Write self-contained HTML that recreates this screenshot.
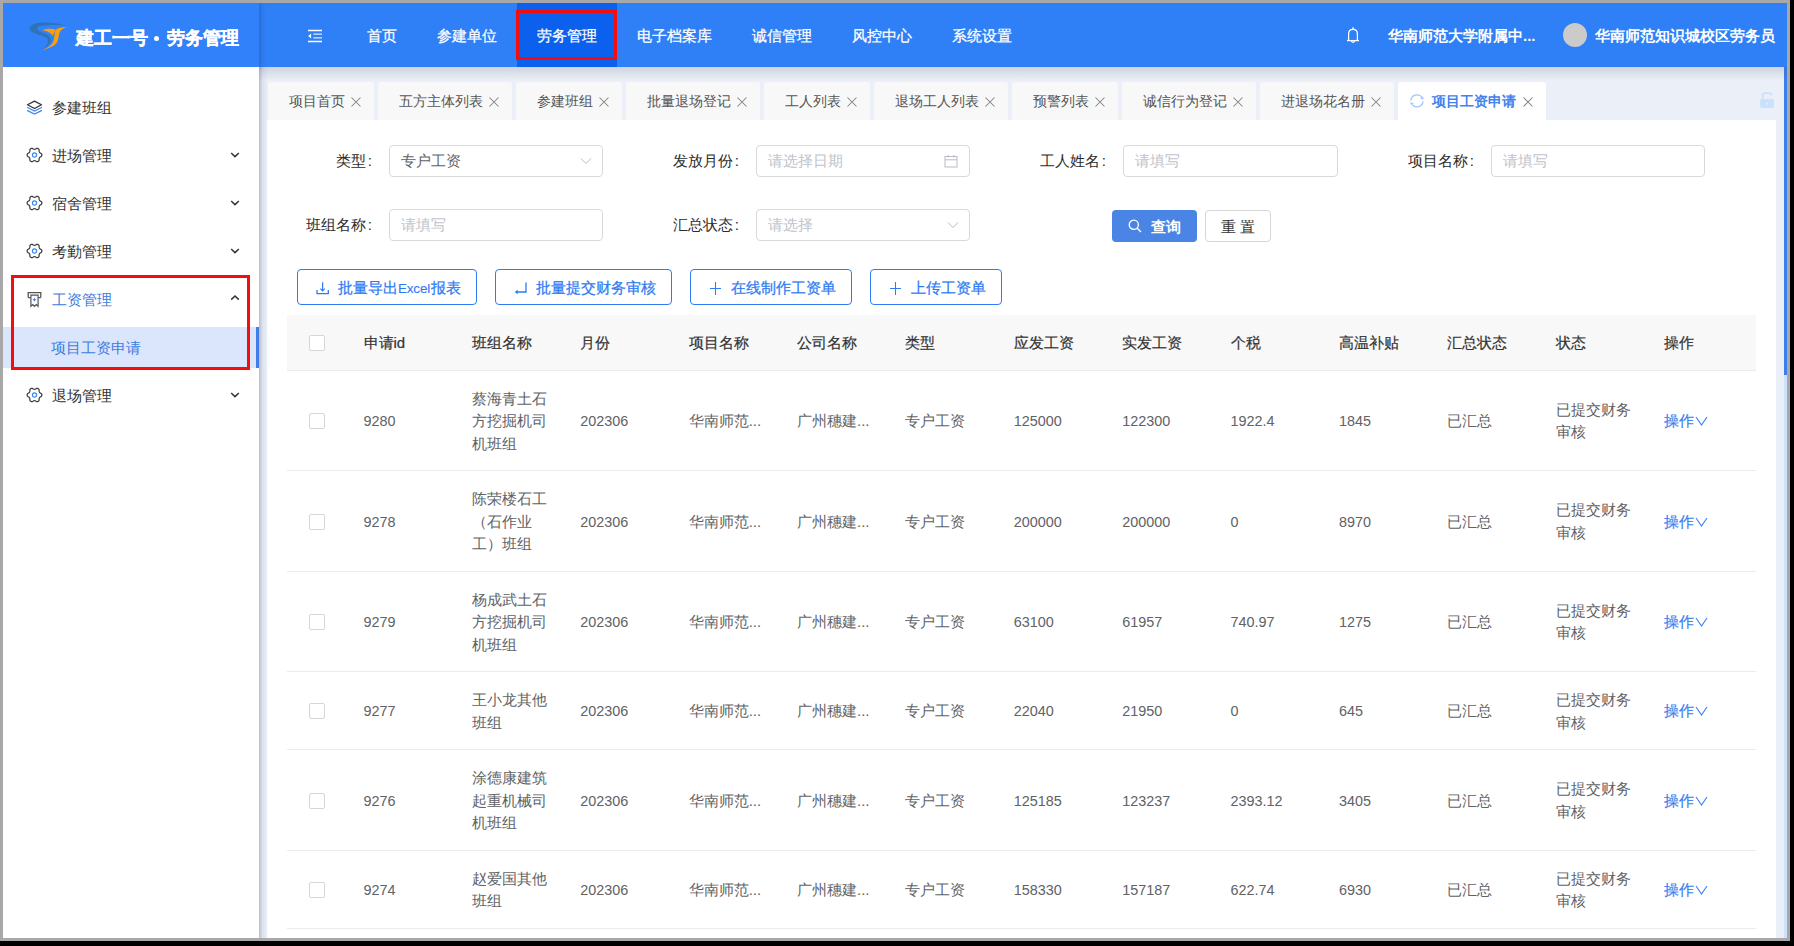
<!DOCTYPE html>
<html><head><meta charset="utf-8"><style>
*{box-sizing:border-box;margin:0;padding:0}
html,body{width:1794px;height:946px;overflow:hidden;background:#000;font-family:"Liberation Sans",sans-serif;}
.abs{position:absolute}
#frame{position:absolute;left:0;top:0;width:1790px;height:941px;background:#a8a8a8}
#app{position:absolute;left:3px;top:3px;width:1784px;height:935px;background:#ebf0f8;overflow:hidden}
#hdr{position:absolute;left:0;top:0;width:1784px;height:64px;background:#2f7ff7;z-index:3}
#logo{position:absolute;left:0;top:0;width:256px;height:64px;background:#3181fa;box-shadow:1px 0 5px rgba(20,40,90,.35)}
.title{position:absolute;left:73px;top:23px;width:170px;height:24px;font-size:18px;line-height:24px;font-weight:bold;color:#fff;white-space:nowrap;-webkit-text-stroke:0.3px #fff}
.nav{position:absolute;top:1px;height:63px;line-height:63px;color:#fff;font-size:15px;white-space:nowrap;-webkit-text-stroke:0.25px #fff}
.nav.act{background:#0c60ee;top:0;height:64px;padding-top:1px}
.boxr{position:absolute;border:3px solid #f30d0d}
#side{position:absolute;left:0;top:64px;width:256px;height:872px;background:#fff;z-index:4}
.mi{position:absolute;left:0;width:256px;height:48px;font-size:15px;color:#333;line-height:48px}
.mi .t{position:absolute;left:49px;top:-2px}
.mi svg{position:absolute}
#sub{position:absolute;left:0;top:260px;width:256px;height:41px;background:#dbe6fd}
#sub .bar{position:absolute;right:0;top:0;width:3px;height:41px;background:#3f7ee8}
.tab{position:absolute;top:79px;height:38px;background:#f8f8f8;border-radius:3px 3px 0 0;font-size:14px;color:#555;line-height:38px;white-space:nowrap}
.tab .tx{position:absolute;left:21px;top:0}
.tab svg{position:absolute;top:15px}
#card{position:absolute;left:264px;top:117px;width:1509px;height:830px;background:#fff}
.lbl{position:absolute;font-size:15px;color:#2b2b2b;line-height:32px;text-align:right;white-space:nowrap}
.inp{position:absolute;height:32px;border:1px solid #d9d9d9;border-radius:4px;background:#fff;font-size:15px;line-height:30px;padding-left:11px;color:#606266;white-space:nowrap}
.inp.ph{color:#c0c4cc}
.inp svg{position:absolute}
.btn{position:absolute;height:36px;border:1px solid #2f7bf5;border-radius:4px;color:#2f7bf5;-webkit-text-stroke:0.25px #2f7bf5;font-size:15px;line-height:34px;white-space:nowrap;background:#fff}
.btn svg{position:absolute;top:10px}
.btn .tx{position:absolute;top:0}
table{position:absolute;border-collapse:collapse;table-layout:fixed;font-size:15px;color:#606266}
td,th{padding:17px 16.5px 15px;line-height:22.5px;text-align:left;vertical-align:middle;word-break:break-all;border-bottom:1px solid #ebebeb}
th{background:#f8f8f8;color:#333;font-weight:normal;height:55px;padding-top:1px;padding-bottom:0;-webkit-text-stroke:0.2px #333}
.cb{display:inline-block;width:16px;height:16px;border:1px solid #d6d6d6;border-radius:2px;background:#fff;vertical-align:middle}
.op{color:#3a7ff0;-webkit-text-stroke:0.2px #3a7ff0}
.n{font-size:14.4px}
</style></head><body>
<div id="frame"></div><div id="app">
<div id="hdr">
<div id="logo">
<svg class="abs" style="left:23px;top:15px" width="44" height="36" viewBox="0 0 44 36">
<path d="M39.6 7.4C33 5 20 3.6 11.4 4.9C6 5.8 3.5 8.5 3.8 11C4 13 6.5 14.5 9.5 15.6C13 16.8 17.5 17.8 20.5 20C22.5 21.5 22.3 24.5 20.5 27C19.5 28.5 18 30.2 16 31.6C19 30 22.5 27.5 24.2 24.5C25.5 21.5 24.5 19 21.5 17C18.5 15 13.5 14 11.8 12C10.5 10.5 11.5 9 13.5 8.3C18 7 30 6.5 39.6 7.4Z" fill="#2e74b5"/>
<path d="M16.4 12.6C19 10.8 24 10.4 29.7 11.4L28.9 13.3C28 15 27.2 16.5 26.6 17.9C25 15 21 12.8 16.4 12.6Z" fill="#f7a00c"/>
<path d="M40.7 9.3C38 10 35 11.5 33.8 14C32.6 17 32.8 20 31.5 23.5C30 27 25 30 16 32C21 30.5 25 27.5 26.8 24.5C28.3 21.5 28.3 17 28.9 14.1C29.4 11.5 31 10.3 34.3 9.7C36.5 9.4 38.5 9.3 40.7 9.3Z" fill="#f7a00c"/>
</svg>
<div class="title"><span class="abs" style="left:0">建工一号</span><span class="abs" style="left:78px;top:10px;width:5px;height:5px;border-radius:50%;background:#fff"></span><span class="abs" style="left:91px">劳务管理</span></div>
</div>
<svg class="abs" style="left:304px;top:26px" width="16" height="14" viewBox="0 0 16 14">
<path d="M1 1.5H15M1 12.5H15" stroke="#fff" stroke-width="1.3"/><path d="M6.3 5.1H15M6.3 8.9H15" stroke="#fff" stroke-width="1.2" opacity=".85"/>
<path d="M4.1 4.6L1.1 7L4.1 9.4Z" fill="#fff"/>
</svg>

<div class="nav" style="left:344px;width:70px;text-align:center">首页</div>
<div class="nav" style="left:414px;width:100px;text-align:center">参建单位</div>
<div class="nav act" style="left:514px;width:100px;text-align:center">劳务管理</div>
<div class="nav" style="left:614px;width:115px;text-align:center">电子档案库</div>
<div class="nav" style="left:729px;width:100px;text-align:center">诚信管理</div>
<div class="nav" style="left:829px;width:100px;text-align:center">风控中心</div>
<div class="nav" style="left:929px;width:100px;text-align:center">系统设置</div>
<div class="boxr" style="left:513px;top:7px;width:101px;height:50px"></div>
<svg class="abs" style="left:1342px;top:23px" width="16" height="18" viewBox="0 0 16 18"><path d="M3.6 13.9V8.2C3.6 5.2 5.5 3.4 8 3.4C10.5 3.4 12.4 5.2 12.4 8.2V13.9" stroke="#fff" stroke-width="1.25" fill="none"/><path d="M2 14.6H14" stroke="#fff" stroke-width="1.3"/><path d="M8 1.3V3.4" stroke="#fff" stroke-width="1.3"/><path d="M6.3 15.2Q8 17.4 9.7 15.2" stroke="#fff" stroke-width="1.2" fill="none"/></svg>
<div class="nav" style="left:1385px;font-weight:bold;-webkit-text-stroke:0">华南师范大学附属中...</div>
<div class="abs" style="left:1560px;top:20px;width:24px;height:24px;border-radius:50%;background:#cbcbcb"></div>
<div class="nav" style="left:1592px;font-weight:bold;-webkit-text-stroke:0">华南师范知识城校区劳务员</div>
</div>
<div id="side">
<div class="mi" style="top:19px"><svg style="left:21px;top:10px" width="22" height="22" viewBox="0 0 22 22"><path d="M3.5 8.7L10.5 5.1L17.5 8.7L10.5 12.5Z" stroke="#333" stroke-width="1.25" fill="none" stroke-linejoin="round"/><path d="M3.5 11.5L10.5 15.1L17.5 11.5M3.5 14.6L10.5 18.1L17.5 14.6" stroke="#3f86f7" stroke-width="1.25" fill="none" stroke-linecap="round"/></svg><span class="t">参建班组</span></div>
<div class="mi" style="top:67px"><svg style="left:21px;top:10px" width="22" height="22" viewBox="0 0 22 22"><path d="M17.90 11.00 L17.79 11.64 L17.47 12.23 L16.83 12.70 L16.16 13.06 L15.74 13.44 L15.44 13.85 L15.24 14.32 L15.12 14.87 L15.13 15.63 L15.05 16.42 L14.70 17.00 L14.20 17.41 L13.59 17.63 L12.92 17.65 L12.20 17.33 L11.55 16.94 L11.00 16.76 L10.50 16.70 L10.00 16.76 L9.45 16.94 L8.80 17.33 L8.08 17.65 L7.41 17.63 L6.80 17.41 L6.30 17.00 L5.95 16.42 L5.87 15.63 L5.88 14.87 L5.76 14.32 L5.56 13.85 L5.26 13.44 L4.84 13.06 L4.17 12.70 L3.53 12.23 L3.21 11.64 L3.10 11.00 L3.21 10.36 L3.53 9.77 L4.17 9.30 L4.84 8.94 L5.26 8.56 L5.56 8.15 L5.76 7.68 L5.88 7.13 L5.87 6.37 L5.95 5.58 L6.30 5.00 L6.80 4.59 L7.41 4.37 L8.08 4.35 L8.80 4.67 L9.45 5.06 L10.00 5.24 L10.50 5.30 L11.00 5.24 L11.55 5.06 L12.20 4.67 L12.92 4.35 L13.59 4.37 L14.20 4.59 L14.70 5.00 L15.05 5.58 L15.13 6.37 L15.12 7.13 L15.24 7.68 L15.44 8.15 L15.74 8.56 L16.16 8.94 L16.83 9.30 L17.47 9.77 L17.79 10.36Z" stroke="#3a3a3a" stroke-width="1.2" fill="none" stroke-linejoin="round"/><circle cx="10.5" cy="11" r="2.1" stroke="#3f86f7" stroke-width="1.2" fill="none"/></svg><span class="t">进场管理</span><svg style="left:226px;top:17px" width="12" height="8" viewBox="0 0 12 8"><path d="M2.2 2L6 5.6L9.8 2" stroke="#333" stroke-width="1.5" fill="none"/></svg></div>
<div class="mi" style="top:115px"><svg style="left:21px;top:10px" width="22" height="22" viewBox="0 0 22 22"><path d="M17.90 11.00 L17.79 11.64 L17.47 12.23 L16.83 12.70 L16.16 13.06 L15.74 13.44 L15.44 13.85 L15.24 14.32 L15.12 14.87 L15.13 15.63 L15.05 16.42 L14.70 17.00 L14.20 17.41 L13.59 17.63 L12.92 17.65 L12.20 17.33 L11.55 16.94 L11.00 16.76 L10.50 16.70 L10.00 16.76 L9.45 16.94 L8.80 17.33 L8.08 17.65 L7.41 17.63 L6.80 17.41 L6.30 17.00 L5.95 16.42 L5.87 15.63 L5.88 14.87 L5.76 14.32 L5.56 13.85 L5.26 13.44 L4.84 13.06 L4.17 12.70 L3.53 12.23 L3.21 11.64 L3.10 11.00 L3.21 10.36 L3.53 9.77 L4.17 9.30 L4.84 8.94 L5.26 8.56 L5.56 8.15 L5.76 7.68 L5.88 7.13 L5.87 6.37 L5.95 5.58 L6.30 5.00 L6.80 4.59 L7.41 4.37 L8.08 4.35 L8.80 4.67 L9.45 5.06 L10.00 5.24 L10.50 5.30 L11.00 5.24 L11.55 5.06 L12.20 4.67 L12.92 4.35 L13.59 4.37 L14.20 4.59 L14.70 5.00 L15.05 5.58 L15.13 6.37 L15.12 7.13 L15.24 7.68 L15.44 8.15 L15.74 8.56 L16.16 8.94 L16.83 9.30 L17.47 9.77 L17.79 10.36Z" stroke="#3a3a3a" stroke-width="1.2" fill="none" stroke-linejoin="round"/><circle cx="10.5" cy="11" r="2.1" stroke="#3f86f7" stroke-width="1.2" fill="none"/></svg><span class="t">宿舍管理</span><svg style="left:226px;top:17px" width="12" height="8" viewBox="0 0 12 8"><path d="M2.2 2L6 5.6L9.8 2" stroke="#333" stroke-width="1.5" fill="none"/></svg></div>
<div class="mi" style="top:163px"><svg style="left:21px;top:10px" width="22" height="22" viewBox="0 0 22 22"><path d="M17.90 11.00 L17.79 11.64 L17.47 12.23 L16.83 12.70 L16.16 13.06 L15.74 13.44 L15.44 13.85 L15.24 14.32 L15.12 14.87 L15.13 15.63 L15.05 16.42 L14.70 17.00 L14.20 17.41 L13.59 17.63 L12.92 17.65 L12.20 17.33 L11.55 16.94 L11.00 16.76 L10.50 16.70 L10.00 16.76 L9.45 16.94 L8.80 17.33 L8.08 17.65 L7.41 17.63 L6.80 17.41 L6.30 17.00 L5.95 16.42 L5.87 15.63 L5.88 14.87 L5.76 14.32 L5.56 13.85 L5.26 13.44 L4.84 13.06 L4.17 12.70 L3.53 12.23 L3.21 11.64 L3.10 11.00 L3.21 10.36 L3.53 9.77 L4.17 9.30 L4.84 8.94 L5.26 8.56 L5.56 8.15 L5.76 7.68 L5.88 7.13 L5.87 6.37 L5.95 5.58 L6.30 5.00 L6.80 4.59 L7.41 4.37 L8.08 4.35 L8.80 4.67 L9.45 5.06 L10.00 5.24 L10.50 5.30 L11.00 5.24 L11.55 5.06 L12.20 4.67 L12.92 4.35 L13.59 4.37 L14.20 4.59 L14.70 5.00 L15.05 5.58 L15.13 6.37 L15.12 7.13 L15.24 7.68 L15.44 8.15 L15.74 8.56 L16.16 8.94 L16.83 9.30 L17.47 9.77 L17.79 10.36Z" stroke="#3a3a3a" stroke-width="1.2" fill="none" stroke-linejoin="round"/><circle cx="10.5" cy="11" r="2.1" stroke="#3f86f7" stroke-width="1.2" fill="none"/></svg><span class="t">考勤管理</span><svg style="left:226px;top:17px" width="12" height="8" viewBox="0 0 12 8"><path d="M2.2 2L6 5.6L9.8 2" stroke="#333" stroke-width="1.5" fill="none"/></svg></div>
<div class="mi" style="top:211px;color:#3d7be0"><svg style="left:21px;top:10px" width="22" height="22" viewBox="0 0 22 22"><path d="M4.2 9.6V4.7H16.8V9.6M4.2 9.6H6.6M14.4 9.6H16.8" stroke="#555" stroke-width="1.3" fill="none"/><path d="M6.9 18.3V7.1H14.1V18.3L12.3 16.6L10.5 18.3L8.7 16.6Z" stroke="#555" stroke-width="1.2" fill="none" stroke-linejoin="miter"/><path d="M10.5 9.6L11.2 11L12.6 11.7L11.2 12.4L10.5 13.8L9.8 12.4L8.4 11.7L9.8 11Z" fill="#3f86f7"/></svg><span class="t">工资管理</span><svg style="left:226px;top:16px" width="12" height="8" viewBox="0 0 12 8"><path d="M2.2 5.6L6 2L9.8 5.6" stroke="#333" stroke-width="1.5" fill="none"/></svg></div>
<div class="mi" style="top:307px"><svg style="left:21px;top:10px" width="22" height="22" viewBox="0 0 22 22"><path d="M17.90 11.00 L17.79 11.64 L17.47 12.23 L16.83 12.70 L16.16 13.06 L15.74 13.44 L15.44 13.85 L15.24 14.32 L15.12 14.87 L15.13 15.63 L15.05 16.42 L14.70 17.00 L14.20 17.41 L13.59 17.63 L12.92 17.65 L12.20 17.33 L11.55 16.94 L11.00 16.76 L10.50 16.70 L10.00 16.76 L9.45 16.94 L8.80 17.33 L8.08 17.65 L7.41 17.63 L6.80 17.41 L6.30 17.00 L5.95 16.42 L5.87 15.63 L5.88 14.87 L5.76 14.32 L5.56 13.85 L5.26 13.44 L4.84 13.06 L4.17 12.70 L3.53 12.23 L3.21 11.64 L3.10 11.00 L3.21 10.36 L3.53 9.77 L4.17 9.30 L4.84 8.94 L5.26 8.56 L5.56 8.15 L5.76 7.68 L5.88 7.13 L5.87 6.37 L5.95 5.58 L6.30 5.00 L6.80 4.59 L7.41 4.37 L8.08 4.35 L8.80 4.67 L9.45 5.06 L10.00 5.24 L10.50 5.30 L11.00 5.24 L11.55 5.06 L12.20 4.67 L12.92 4.35 L13.59 4.37 L14.20 4.59 L14.70 5.00 L15.05 5.58 L15.13 6.37 L15.12 7.13 L15.24 7.68 L15.44 8.15 L15.74 8.56 L16.16 8.94 L16.83 9.30 L17.47 9.77 L17.79 10.36Z" stroke="#3a3a3a" stroke-width="1.2" fill="none" stroke-linejoin="round"/><circle cx="10.5" cy="11" r="2.1" stroke="#3f86f7" stroke-width="1.2" fill="none"/></svg><span class="t">退场管理</span><svg style="left:226px;top:17px" width="12" height="8" viewBox="0 0 12 8"><path d="M2.2 2L6 5.6L9.8 2" stroke="#333" stroke-width="1.5" fill="none"/></svg></div>
<div id="sub"><div class="bar"></div><span class="abs" style="left:48px;top:0px;line-height:41px;font-size:15px;color:#3d7be0">项目工资申请</span></div>
<div class="boxr" style="left:8px;top:208px;width:239px;height:95px"></div>
</div>
<div class="tab" style="left:265px;width:106px"><span class="tx">项目首页</span><svg style="left:83px" width="10" height="10" viewBox="0 0 10 10"><path d="M0.5 0.5L9.5 9.5M9.5 0.5L0.5 9.5" stroke="#808080" stroke-width="1.05"/></svg></div>
<div class="tab" style="left:375px;width:134px"><span class="tx">五方主体列表</span><svg style="left:111px" width="10" height="10" viewBox="0 0 10 10"><path d="M0.5 0.5L9.5 9.5M9.5 0.5L0.5 9.5" stroke="#808080" stroke-width="1.05"/></svg></div>
<div class="tab" style="left:513px;width:106px"><span class="tx">参建班组</span><svg style="left:83px" width="10" height="10" viewBox="0 0 10 10"><path d="M0.5 0.5L9.5 9.5M9.5 0.5L0.5 9.5" stroke="#808080" stroke-width="1.05"/></svg></div>
<div class="tab" style="left:623px;width:134px"><span class="tx">批量退场登记</span><svg style="left:111px" width="10" height="10" viewBox="0 0 10 10"><path d="M0.5 0.5L9.5 9.5M9.5 0.5L0.5 9.5" stroke="#808080" stroke-width="1.05"/></svg></div>
<div class="tab" style="left:761px;width:106px"><span class="tx">工人列表</span><svg style="left:83px" width="10" height="10" viewBox="0 0 10 10"><path d="M0.5 0.5L9.5 9.5M9.5 0.5L0.5 9.5" stroke="#808080" stroke-width="1.05"/></svg></div>
<div class="tab" style="left:871px;width:134px"><span class="tx">退场工人列表</span><svg style="left:111px" width="10" height="10" viewBox="0 0 10 10"><path d="M0.5 0.5L9.5 9.5M9.5 0.5L0.5 9.5" stroke="#808080" stroke-width="1.05"/></svg></div>
<div class="tab" style="left:1009px;width:106px"><span class="tx">预警列表</span><svg style="left:83px" width="10" height="10" viewBox="0 0 10 10"><path d="M0.5 0.5L9.5 9.5M9.5 0.5L0.5 9.5" stroke="#808080" stroke-width="1.05"/></svg></div>
<div class="tab" style="left:1119px;width:134px"><span class="tx">诚信行为登记</span><svg style="left:111px" width="10" height="10" viewBox="0 0 10 10"><path d="M0.5 0.5L9.5 9.5M9.5 0.5L0.5 9.5" stroke="#808080" stroke-width="1.05"/></svg></div>
<div class="tab" style="left:1257px;width:134px"><span class="tx">进退场花名册</span><svg style="left:111px" width="10" height="10" viewBox="0 0 10 10"><path d="M0.5 0.5L9.5 9.5M9.5 0.5L0.5 9.5" stroke="#808080" stroke-width="1.05"/></svg></div>
<div id="card"></div>
<div class="tab" style="left:1395px;width:148px;background:#fff;height:39px"><svg style="left:12px;top:12px" width="15" height="15" viewBox="0 0 15 15"><path d="M0.8 6.6A6.2 6.2 0 0 1 12 3.4M13.1 7.4A6.2 6.2 0 0 1 2.2 10.6" stroke="#9ec5fb" stroke-width="1.25" fill="none"/><path d="M13 2.2L13.6 5.4L10.2 4.7Z M0.3 8.3L3.9 9.3L0.9 11.1Z" fill="#9ec5fb"/></svg><span class="tx" style="left:34px;color:#4282ec;font-weight:bold">项目工资申请</span><svg style="left:125px" width="10" height="10" viewBox="0 0 10 10"><path d="M0.5 0.5L9.5 9.5M9.5 0.5L0.5 9.5" stroke="#808080" stroke-width="1.05"/></svg></div>
<svg class="abs" style="left:1757px;top:89px" width="15" height="17" viewBox="0 0 15 17"><path d="M2.7 7.3V3.2Q2.7 1.1 4.8 1.1H9.3Q11.3 1.1 11.5 3.4" stroke="#c9e1fc" stroke-width="1.7" fill="none"/><rect x="0.2" y="7.1" width="13.6" height="8.8" fill="#c9e1fc"/><rect x="6.3" y="10.1" width="1.4" height="2.8" fill="#e2eefc"/></svg>
<div class="lbl" style="left:249px;width:120px;top:142px">类型<span style="margin-left:1.6px">:</span></div>
<div class="inp" style="left:386px;top:142px;width:214px">专户工资<svg style="left:190px;top:11px" width="12" height="8" viewBox="0 0 12 8"><path d="M1 1.5L6 6.5L11 1.5" stroke="#b9bcc4" stroke-width="1" fill="none"/></svg></div>
<div class="lbl" style="left:616px;width:120px;top:142px">发放月份<span style="margin-left:1.6px">:</span></div>
<div class="inp ph" style="left:753px;top:142px;width:214px">请选择日期<svg style="left:187px;top:8px" width="14" height="14" viewBox="0 0 14 14"><rect x="1" y="2.5" width="12" height="10.5" stroke="#b9bcc4" stroke-width="1" fill="none"/><path d="M1 5.8H13M4.2 1V3.5M9.8 1V3.5" stroke="#b9bcc4" stroke-width="1"/></svg></div>
<div class="lbl" style="left:983px;width:120px;top:142px">工人姓名<span style="margin-left:1.6px">:</span></div>
<div class="inp ph" style="left:1120px;top:142px;width:215px">请填写</div>
<div class="lbl" style="left:1351px;width:120px;top:142px">项目名称<span style="margin-left:1.6px">:</span></div>
<div class="inp ph" style="left:1488px;top:142px;width:214px">请填写</div>
<div class="lbl" style="left:249px;width:120px;top:206px">班组名称<span style="margin-left:1.6px">:</span></div>
<div class="inp ph" style="left:386px;top:206px;width:214px">请填写</div>
<div class="lbl" style="left:616px;width:120px;top:206px">汇总状态<span style="margin-left:1.6px">:</span></div>
<div class="inp ph" style="left:753px;top:206px;width:214px">请选择<svg style="left:190px;top:11px" width="12" height="8" viewBox="0 0 12 8"><path d="M1 1.5L6 6.5L11 1.5" stroke="#b9bcc4" stroke-width="1" fill="none"/></svg></div>
<div class="abs" style="left:1109px;top:207px;width:85px;height:32px;background:#4a84e4;border-radius:4px;color:#fff;font-size:15px;line-height:32px;font-weight:bold"><svg class="abs" style="left:16px;top:9px" width="14" height="14" viewBox="0 0 14 14"><circle cx="5.8" cy="5.8" r="4.6" stroke="#fff" stroke-width="1.3" fill="none"/><path d="M9.2 9.2L13 13" stroke="#fff" stroke-width="1.3"/></svg><span class="abs" style="left:39px;top:1px">查询</span></div>
<div class="abs" style="left:1202px;top:207px;width:66px;height:32px;border:1px solid #d6d6d6;background:#fff;border-radius:4px;color:#333;font-size:15px;line-height:32px;text-align:center;letter-spacing:4px;padding-left:3px">重置</div>
<div class="btn" style="left:294px;top:266px;width:180px"><svg style="left:17px" width="16" height="16" viewBox="0 0 16 16"><path d="M7.6 2.2V10.6M5.4 8.6L7.6 10.8L9.8 8.6" stroke="#2f7bf5" stroke-width="1.2" fill="none"/><path d="M2 10V13.7H13.3V10" stroke="#2f7bf5" stroke-width="1.3" fill="none"/></svg><span class="tx" style="left:40px;top:1px">批量导出<span style="font-size:13.5px;letter-spacing:-0.2px;-webkit-text-stroke:0.1px;margin-right:1px">Excel</span>报表</span></div>
<div class="btn" style="left:492px;top:266px;width:177px"><svg style="left:17px" width="16" height="16" viewBox="0 0 16 16"><path d="M13 2.5V12H3.5" stroke="#2f7bf5" stroke-width="1.3" fill="none"/><path d="M4.6 9.7L1.7 12L4.6 14.3Z" fill="#2f7bf5"/></svg><span class="tx" style="left:40px;top:1px">批量提交财务审核</span></div>
<div class="btn" style="left:687px;top:266px;width:162px"><svg style="left:17px" width="16" height="16" viewBox="0 0 16 16"><path d="M7.5 2V15M2 8.5H13" stroke="#2f7bf5" stroke-width="1.05" fill="none"/></svg><span class="tx" style="left:40px;top:1px">在线制作工资单</span></div>
<div class="btn" style="left:867px;top:266px;width:132px"><svg style="left:17px" width="16" height="16" viewBox="0 0 16 16"><path d="M7.5 2V15M2 8.5H13" stroke="#2f7bf5" stroke-width="1.05" fill="none"/></svg><span class="tx" style="left:40px;top:1px">上传工资单</span></div>
<table style="left:284px;top:312px;width:1469px">
<colgroup><col style="width:60px"><col style="width:108.384px"><col style="width:108.384px"><col style="width:108.384px"><col style="width:108.384px"><col style="width:108.384px"><col style="width:108.384px"><col style="width:108.384px"><col style="width:108.384px"><col style="width:108.384px"><col style="width:108.384px"><col style="width:108.384px"><col style="width:108.384px"><col style="width:108.384px"></colgroup>
<tr><th style="text-align:center;padding:0"><span class="cb"></span></th><th>申请id</th><th>班组名称</th><th>月份</th><th>项目名称</th><th>公司名称</th><th>类型</th><th>应发工资</th><th>实发工资</th><th>个税</th><th>高温补贴</th><th>汇总状态</th><th>状态</th><th>操作</th></tr>
<tr><td style="text-align:center;padding:16px 0"><span class="cb"></span></td><td class=n>9280</td><td>蔡海青土石方挖掘机司机班组</td><td class=n>202306</td><td>华南师范...</td><td>广州穗建...</td><td>专户工资</td><td class=n>125000</td><td class=n>122300</td><td class=n>1922.4</td><td class=n>1845</td><td>已汇总</td><td>已提交财务审核</td><td class="op">操作<svg width="13" height="10" viewBox="0 0 13 10" style="vertical-align:0px;margin-left:1px"><path d="M1 1L6.5 9L12 1" stroke="#3a7ff0" stroke-width="1.1" fill="none"/></svg></td></tr>
<tr><td style="text-align:center;padding:16px 0"><span class="cb"></span></td><td class=n>9278</td><td>陈荣楼石工（石作业工）班组</td><td class=n>202306</td><td>华南师范...</td><td>广州穗建...</td><td>专户工资</td><td class=n>200000</td><td class=n>200000</td><td class=n>0</td><td class=n>8970</td><td>已汇总</td><td>已提交财务审核</td><td class="op">操作<svg width="13" height="10" viewBox="0 0 13 10" style="vertical-align:0px;margin-left:1px"><path d="M1 1L6.5 9L12 1" stroke="#3a7ff0" stroke-width="1.1" fill="none"/></svg></td></tr>
<tr><td style="text-align:center;padding:16px 0"><span class="cb"></span></td><td class=n>9279</td><td>杨成武土石方挖掘机司机班组</td><td class=n>202306</td><td>华南师范...</td><td>广州穗建...</td><td>专户工资</td><td class=n>63100</td><td class=n>61957</td><td class=n>740.97</td><td class=n>1275</td><td>已汇总</td><td>已提交财务审核</td><td class="op">操作<svg width="13" height="10" viewBox="0 0 13 10" style="vertical-align:0px;margin-left:1px"><path d="M1 1L6.5 9L12 1" stroke="#3a7ff0" stroke-width="1.1" fill="none"/></svg></td></tr>
<tr><td style="text-align:center;padding:16px 0"><span class="cb"></span></td><td class=n>9277</td><td>王小龙其他班组</td><td class=n>202306</td><td>华南师范...</td><td>广州穗建...</td><td>专户工资</td><td class=n>22040</td><td class=n>21950</td><td class=n>0</td><td class=n>645</td><td>已汇总</td><td>已提交财务审核</td><td class="op">操作<svg width="13" height="10" viewBox="0 0 13 10" style="vertical-align:0px;margin-left:1px"><path d="M1 1L6.5 9L12 1" stroke="#3a7ff0" stroke-width="1.1" fill="none"/></svg></td></tr>
<tr><td style="text-align:center;padding:16px 0"><span class="cb"></span></td><td class=n>9276</td><td>涂德康建筑起重机械司机班组</td><td class=n>202306</td><td>华南师范...</td><td>广州穗建...</td><td>专户工资</td><td class=n>125185</td><td class=n>123237</td><td class=n>2393.12</td><td class=n>3405</td><td>已汇总</td><td>已提交财务审核</td><td class="op">操作<svg width="13" height="10" viewBox="0 0 13 10" style="vertical-align:0px;margin-left:1px"><path d="M1 1L6.5 9L12 1" stroke="#3a7ff0" stroke-width="1.1" fill="none"/></svg></td></tr>
<tr><td style="text-align:center;padding:16px 0"><span class="cb"></span></td><td class=n>9274</td><td>赵爱国其他班组</td><td class=n>202306</td><td>华南师范...</td><td>广州穗建...</td><td>专户工资</td><td class=n>158330</td><td class=n>157187</td><td class=n>622.74</td><td class=n>6930</td><td>已汇总</td><td>已提交财务审核</td><td class="op">操作<svg width="13" height="10" viewBox="0 0 13 10" style="vertical-align:0px;margin-left:1px"><path d="M1 1L6.5 9L12 1" stroke="#3a7ff0" stroke-width="1.1" fill="none"/></svg></td></tr>
</table>
<div class="abs" style="left:256px;top:64px;width:1528px;height:14px;background:linear-gradient(rgba(60,70,90,.16),rgba(60,70,90,0));z-index:5"></div>
<div class="abs" style="left:256px;top:64px;width:9px;height:872px;background:linear-gradient(to right,rgba(60,70,100,.30),rgba(60,70,100,.08) 40%,rgba(60,70,100,0));z-index:5"></div>
<div class="abs" style="left:1781px;top:63px;width:3px;height:872px;background:#cfe2fb"></div>
<div class="abs" style="left:1781px;top:64px;width:3px;height:308px;background:#3b7fe9"></div>
</div>
</body></html>
